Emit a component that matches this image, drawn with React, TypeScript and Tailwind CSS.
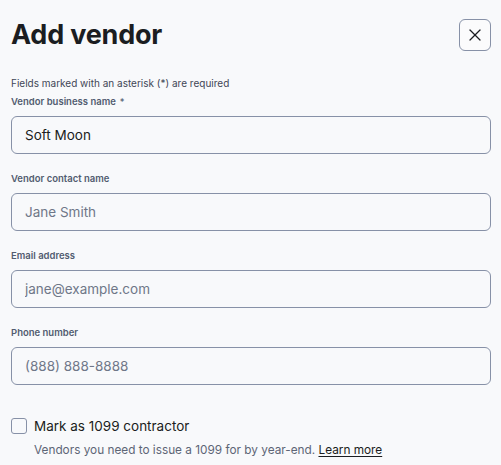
import { X } from "lucide-react";

const fields = [
  { label: "Vendor business name", required: true, value: "Soft Moon", placeholder: "" },
  { label: "Vendor contact name", required: false, value: "", placeholder: "Jane Smith" },
  { label: "Email address", required: false, value: "", placeholder: "jane@example.com" },
  { label: "Phone number", required: false, value: "", placeholder: "(888) 888-8888" },
];

export default function App() {
  return (
    <div
      className="min-h-screen w-[501px] bg-[#f8f9fb] px-[11px] pt-[19px] text-[#1b1d21]"
      style={{ fontFamily: "Inter, 'Noto Sans', sans-serif" }}
    >
      <div className="flex items-center justify-between">
        <h1 className="text-[27px] leading-[32px] font-bold tracking-[-0.2px]">Add vendor</h1>
        <button className="mr-[-1px] flex h-8 w-8 items-center justify-center rounded-md border border-[#8791a7] bg-white/40">
          <X size={20} strokeWidth={1.5} className="text-[#1b1d21]" />
        </button>
      </div>

      <p className="mt-[26px] text-[10px] leading-3 text-[#3f4656]">
        Fields marked with an asterisk (*) are required
      </p>

      <div className="mt-[7px] flex flex-col gap-[19px]">
        {fields.map((f) => (
          <div key={f.label}>
            <label className="block text-[9.5px] leading-3 font-semibold text-[#525c70]">
              {f.label}
              {f.required && <span className="ml-1 font-normal">*</span>}
            </label>
            <input
              readOnly
              defaultValue={f.value}
              placeholder={f.placeholder}
              className="mt-2 h-[38px] w-[480px] rounded-md border border-[#8791a7] bg-[#f8f9fb] px-[13px] text-[13.5px] text-[#1b1d21] placeholder:text-[#6f7788] outline-none"
            />
          </div>
        ))}
      </div>

      <div className="mt-[33px] flex items-center gap-[7px]">
        <span className="h-4 w-4 rounded-[3px] border border-[#8791a7] bg-[#f8f9fb]" />
        <span className="text-[13.5px] leading-4 text-[#1b1d21]">Mark as 1099 contractor</span>
      </div>
      <p className="mt-[10px] ml-[23px] text-[11.8px] leading-3 text-[#5d6576]">
        Vendors you need to issue a 1099 for by year-end.{" "}
        <a className="text-[#1b1d21] underline underline-offset-2">Learn more</a>
      </p>
    </div>
  );
}
